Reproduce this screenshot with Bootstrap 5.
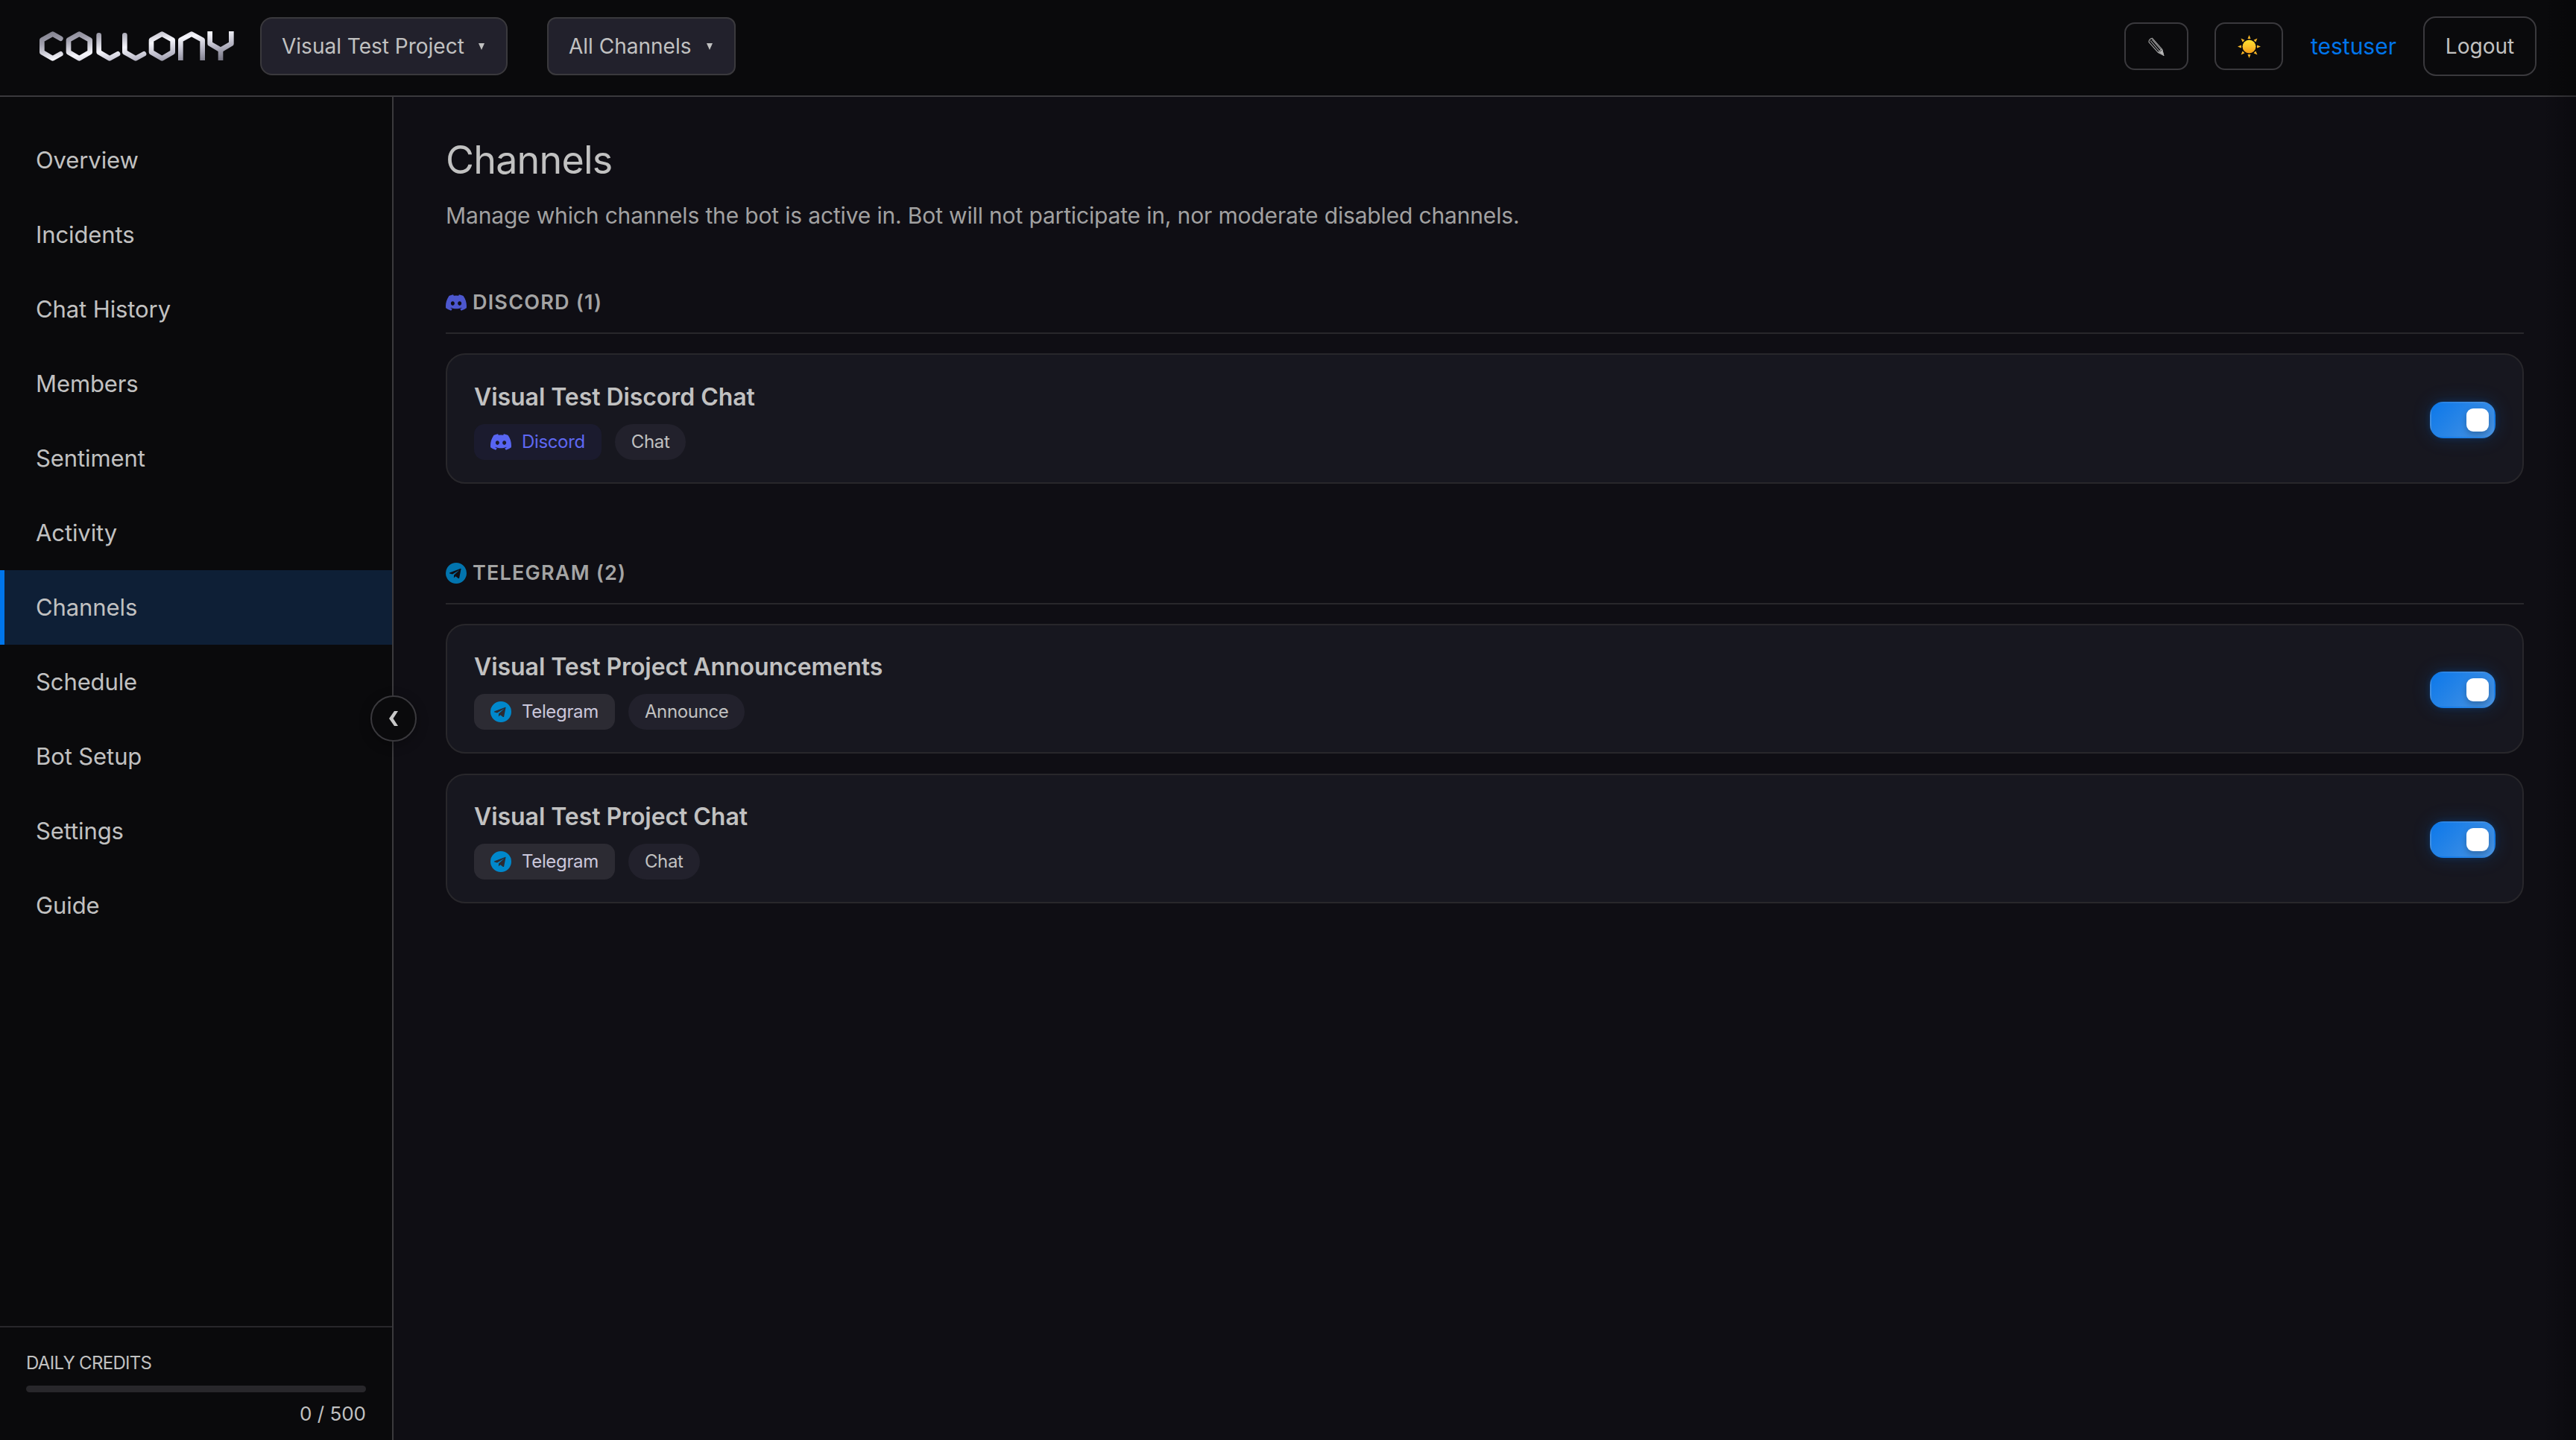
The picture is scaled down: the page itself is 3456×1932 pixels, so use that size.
<!DOCTYPE html>
<html lang="en" data-bs-theme="dark">
<head>
<meta charset="utf-8">
<title>Collony – Channels</title>
<link href="https://cdn.jsdelivr.net/npm/bootstrap@5.3.0/dist/css/bootstrap.min.css" rel="stylesheet">
<style>
:root{--line:#3a393d;--line-soft:#28272b;--ink:#c1c1c1;--blue:#0075eb}
body{font-family:Inter,"Liberation Sans",sans-serif;font-size:32px;line-height:1.5;background:#0f0e14;color:var(--ink);height:1932px;overflow:hidden}
.topbar{height:130px;padding:0 53px 4px;background:#0a0a0c;border-bottom:2px solid var(--line)}
.logo{width:261px;height:40px}
.picker{height:78px;padding:0 29px 0 27px;background:#22212c;border:2px solid var(--line);font-size:28px;color:var(--ink);line-height:1}
.picker:hover{background:#22212c}
.picker-project{width:332px;margin-left:35px;border-radius:16px}
.picker-channel{width:253px;margin-left:53px;border-radius:12px}
.caret{width:8px;height:9px;fill:var(--ink)}
.tool{width:86px;height:64px;border:2px solid var(--line);border-radius:14px;padding:0}
.tool-theme{width:92px;margin-left:35px}
.logout{width:152px;height:80px;margin-left:36px;border:2px solid var(--line);border-radius:17px;font-size:28px;color:var(--ink);padding:0}
.user{width:152px;font-size:30px;color:var(--blue)}
.side{width:528px;background:#0a0a0c;border-right:2px solid var(--line);padding-top:35px}
.side .nav-link{height:100px;padding:0 48px;color:var(--ink);display:flex;align-items:center;letter-spacing:-.1px;font-size:31px}
.side .nav-link.active{background:#0e1f36;box-shadow:inset 6px 0 0 var(--blue)}
.fold{left:497px;top:933px;width:62px;height:62px;border:2px solid var(--line);background:#0a0a0c;box-shadow:0 4px 16px rgba(0,0,0,.3)}
.credits{height:153px;border-top:2px solid var(--line-soft);padding:30px 35px 0;font-size:24px;line-height:36px}
.credits-title{letter-spacing:-.7px}
.meter{height:9px;border-radius:5px;background:#28272b;margin-top:12px}
.credits-count{margin-top:11px;font-size:26px}
.main{padding:50px 70px 0}
h1{font-size:52px;font-weight:400;line-height:70px;margin:0;letter-spacing:-.8px;color:var(--ink)}
.intro{font-size:30px;line-height:44px;letter-spacing:-.16px;color:#a1a1a1;margin:17px 0 74px}
.group + .group{margin-top:99px}
.group-head{font-size:27px;font-weight:600;line-height:40px;letter-spacing:1.2px;color:#a4a4a4;border-bottom:2px solid var(--line-soft);padding-bottom:19px;margin-bottom:26px;gap:8px;height:63px}
.group-head svg{opacity:.84}
.chan{background:#17171f;border:2px solid var(--line-soft);border-radius:26px;height:174.5px;padding:34px 36px 30px}
.chan + .chan{margin-top:26.5px}
.chan-name{font-size:32px;font-weight:600;line-height:46px;letter-spacing:-.06px;height:59px}
.tags{gap:18px}
.tagbox{height:48px;font-size:24px;letter-spacing:-.35px;border-radius:14px;padding:0 22px;gap:14px;background:#2c2b33;color:#cbc8dc;line-height:1}
.tag-discord{background:#1b1b2e;color:#5e68f2}
.tag-kind{border-radius:24px;background:#22212c;color:var(--ink)}
.ico{width:28px;height:28px;flex:none}
.switcher{width:88px;height:49px;border:2px solid transparent;border-radius:18px;padding:0 7px;background:linear-gradient(135deg,#0c78ea,#4a94e2);box-shadow:0 0 26px rgba(0,117,235,.2),0 0 8px rgba(0,117,235,.2)}
.knob{width:30px;height:31px;border-radius:9px;background:#fff;box-shadow:0 4px 8px rgba(0,0,0,.25)}
.edge{right:0;top:0;width:46px;height:100%;background:linear-gradient(90deg,transparent,rgba(0,0,0,.28));pointer-events:none}
</style>
<script src="https://cdn.jsdelivr.net/npm/bootstrap@5.3.0/dist/js/bootstrap.bundle.min.js"></script>
</head>
<body class="d-flex flex-column position-relative">
<svg class="d-none">
  <symbol id="discord" viewBox="0 0 24 24"><path fill="#5865f2" d="M20.317 4.37a19.8 19.8 0 0 0-4.885-1.515.07.07 0 0 0-.079.037c-.21.375-.444.865-.608 1.25a18.3 18.3 0 0 0-5.487 0 12.6 12.6 0 0 0-.617-1.25.08.08 0 0 0-.079-.037A19.7 19.7 0 0 0 3.677 4.37a.07.07 0 0 0-.032.028C.533 9.046-.319 13.58.099 18.058a.08.08 0 0 0 .031.056 19.9 19.9 0 0 0 5.993 3.03.08.08 0 0 0 .084-.028c.462-.63.873-1.295 1.226-1.994a.08.08 0 0 0-.042-.106 13 13 0 0 1-1.872-.892.08.08 0 0 1-.008-.128q.19-.14.372-.292a.07.07 0 0 1 .078-.01c3.928 1.793 8.18 1.793 12.061 0a.07.07 0 0 1 .079.01q.18.15.373.292a.08.08 0 0 1-.007.128 12.3 12.3 0 0 1-1.873.891.08.08 0 0 0-.041.107c.36.698.772 1.363 1.225 1.993a.08.08 0 0 0 .084.029 19.8 19.8 0 0 0 6.002-3.03.08.08 0 0 0 .032-.055c.5-5.177-.838-9.674-3.549-13.66a.06.06 0 0 0-.031-.029zM8.02 15.331c-1.183 0-2.157-1.086-2.157-2.419s.955-2.419 2.157-2.419c1.21 0 2.176 1.095 2.157 2.419 0 1.333-.956 2.419-2.157 2.419m7.975 0c-1.183 0-2.157-1.086-2.157-2.419s.955-2.419 2.157-2.419c1.21 0 2.176 1.095 2.157 2.419 0 1.333-.946 2.419-2.157 2.419"/></symbol>
  <symbol id="telegram" viewBox="0 0 24 24"><path fill="#08c" fill-rule="evenodd" d="M12 0a12 12 0 1 0 0 24 12 12 0 0 0 0-24zm5.600 7.100-2 10.200c-.1.700-.6.900-1.100.6l-3.100-2.300-1.500 1.400c-.2.200-.3.300-.6.300l.2-3.100 5.700-5.200c.3-.2-.1-.3-.4-.1l-7.100 4.400-3-.9c-.7-.2-.7-.7.1-1l11.900-4.600c.6-.2 1.100.1.900 1z"/></symbol>
</svg>

<header class="topbar d-flex align-items-center flex-shrink-0">
  <svg class="logo" viewBox="39 96 783 120" fill="none" stroke="url(#metal)" stroke-width="20" stroke-linejoin="round">
    <defs><linearGradient id="metal" gradientUnits="userSpaceOnUse" x1="0" y1="112" x2="37.700" y2="333.600"><stop offset="0" stop-color="#83828f"/><stop offset=".2" stop-color="#a09fad"/><stop offset=".5" stop-color="#f6f6fc"/><stop offset=".75" stop-color="#b8b7c6"/><stop offset="1" stop-color="#777684"/></linearGradient></defs>
    <g stroke-linecap="round">
      <polyline points="124,125 92,107 49,131 49,180 92,205 124,187"/>
      <polygon points="199,107 242,131 242,180 199,205 156,180 156,131"/>
      <polyline points="278,112 278,180 321,205 354,187"/>
      <polyline points="382,112 382,180 426,205 459,187"/>
      <polygon points="532,107 575,131 575,180 532,205 489,180 489,131"/>
    </g>
    <polyline points="607,213 607,131 651,107 695,131 695,213"/>
    <polyline points="725,96 725,146 768,171 811,146 811,96"/>
    <polyline points="768,171 768,213"/>
  </svg>
  <button class="picker picker-project btn d-flex align-items-center justify-content-between"><span>Visual Test Project</span><svg class="caret" viewBox="0 0 8 9"><path d="M0 0h8L4 9z"/></svg></button>
  <button class="picker picker-channel btn d-flex align-items-center justify-content-between"><span>All Channels</span><svg class="caret" viewBox="0 0 8 9"><path d="M0 0h8L4 9z"/></svg></button>
  <div class="ms-auto d-flex align-items-center">
    <button class="tool btn d-flex align-items-center justify-content-center"><svg width="22" height="25" viewBox="0 0 22 25" fill="none" stroke="#ababab" stroke-width="1.100"><path d="M1 6.500Q.8 2.500 5.500 1.300L18.500 16 20.500 24 13.500 20.500z"/><path d="M3 4.500 15.300 19M5.200 3l12.300 14.200M13.500 20.500l2-1.800 1.300-1.600 1.700-1.100"/><path fill="#bdbdbd" d="M15.500 20.500 19 17.500 20.800 24.300z"/></svg></button>
    <button class="tool tool-theme btn d-flex align-items-center justify-content-center"><svg width="31" height="31" viewBox="0 0 31 31"><defs><linearGradient id="sun" x1="0" y1="0" x2="0" y2="1"><stop offset="0" stop-color="#ffe02e"/><stop offset=".5" stop-color="#fcc42a"/><stop offset="1" stop-color="#f29a16"/></linearGradient></defs><circle cx="15.500" cy="15.500" r="9" fill="url(#sun)"/><g fill="#f9b727"><path id="ray" d="M15.500 0l2 5h-4z"/><use href="#ray" transform="rotate(45 15.500 15.500)"/><use href="#ray" transform="rotate(90 15.500 15.500)"/><use href="#ray" transform="rotate(135 15.500 15.500)"/><use href="#ray" transform="rotate(180 15.500 15.500)"/><use href="#ray" transform="rotate(225 15.500 15.500)"/><use href="#ray" transform="rotate(270 15.500 15.500)"/><use href="#ray" transform="rotate(315 15.500 15.500)"/></g></svg></button>
    <span class="user text-end">testuser</span>
    <button class="logout btn">Logout</button>
  </div>
</header>

<div class="d-flex flex-grow-1">
  <aside class="side d-flex flex-column flex-shrink-0">
    <nav class="nav flex-column flex-nowrap">
      <a class="nav-link">Overview</a>
      <a class="nav-link">Incidents</a>
      <a class="nav-link">Chat History</a>
      <a class="nav-link">Members</a>
      <a class="nav-link">Sentiment</a>
      <a class="nav-link">Activity</a>
      <a class="nav-link active">Channels</a>
      <a class="nav-link">Schedule</a>
      <a class="nav-link">Bot Setup</a>
      <a class="nav-link">Settings</a>
      <a class="nav-link">Guide</a>
    </nav>
    <div class="credits mt-auto">
      <div class="credits-title">DAILY CREDITS</div>
      <div class="meter"></div>
      <div class="credits-count text-end">0 / 500</div>
    </div>
  </aside>
  <main class="main flex-grow-1">
    <h1>Channels</h1>
    <p class="intro">Manage which channels the bot is active in. Bot will not participate in, nor moderate disabled channels.</p>

    <section class="group">
      <div class="group-head d-flex align-items-center"><svg class="ico"><use href="#discord"/></svg><span>DISCORD (1)</span></div>
      <div class="chan d-flex align-items-center justify-content-between">
        <div>
          <div class="chan-name">Visual Test Discord Chat</div>
          <div class="tags d-flex"><span class="tagbox tag-discord d-flex align-items-center"><svg class="ico"><use href="#discord"/></svg>Discord</span><span class="tagbox tag-kind d-flex align-items-center">Chat</span></div>
        </div>
        <div class="switcher d-flex align-items-center justify-content-end"><div class="knob"></div></div>
      </div>
    </section>

    <section class="group">
      <div class="group-head d-flex align-items-center"><svg class="ico"><use href="#telegram"/></svg><span>TELEGRAM (2)</span></div>
      <div class="chan d-flex align-items-center justify-content-between">
        <div>
          <div class="chan-name">Visual Test Project Announcements</div>
          <div class="tags d-flex"><span class="tagbox d-flex align-items-center"><svg class="ico"><use href="#telegram"/></svg>Telegram</span><span class="tagbox tag-kind d-flex align-items-center">Announce</span></div>
        </div>
        <div class="switcher d-flex align-items-center justify-content-end"><div class="knob"></div></div>
      </div>
      <div class="chan d-flex align-items-center justify-content-between">
        <div>
          <div class="chan-name">Visual Test Project Chat</div>
          <div class="tags d-flex"><span class="tagbox d-flex align-items-center"><svg class="ico"><use href="#telegram"/></svg>Telegram</span><span class="tagbox tag-kind d-flex align-items-center">Chat</span></div>
        </div>
        <div class="switcher d-flex align-items-center justify-content-end"><div class="knob"></div></div>
      </div>
    </section>
  </main>
</div>
<button class="fold position-absolute rounded-circle d-flex align-items-center justify-content-center p-0"><svg width="12" height="20" viewBox="0 0 12 20" fill="#c8c8c8"><path d="M7 0h5L5.500 10 12 20H7L0 10z"/></svg></button>
<div class="edge position-absolute"></div>
</body>
</html>
